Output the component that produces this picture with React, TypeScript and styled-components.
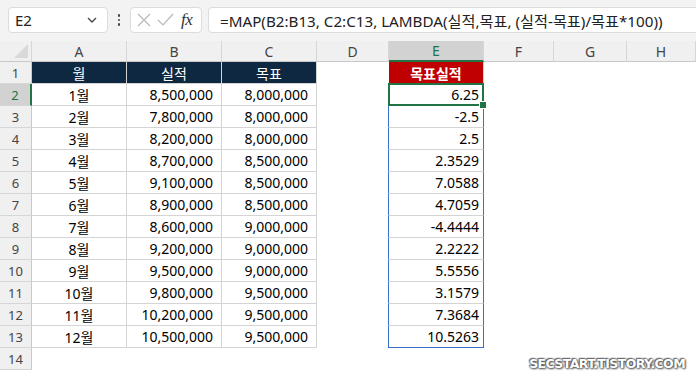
import styled, { createGlobalStyle } from "styled-components";

const GlobalStyle = createGlobalStyle`
    html, body {
        margin: 0;
        padding: 0;
        background: #ffffff;
        font-family: "Noto Sans", "Noto Sans CJK KR", sans-serif;
        overflow: hidden;
    }
`;

const COLS = "32px 95px 95px 95px 72px 95px 70px 73px 1fr";

const Sheet = styled.div`
    position: relative;
    width: 696px;
    height: 375px;
    overflow: hidden;
    background: #ffffff;
`;

const TopBar = styled.div`
    height: 41px;
    box-sizing: border-box;
    padding: 7px 0 0 8px;
    background: #f3f3f3;
    display: flex;
    align-items: flex-start;
`;

const Box = styled.div<{ $w?: number }>`
    height: 26px;
    box-sizing: border-box;
    background: #ffffff;
    border: 1px solid #dcdcdc;
    border-radius: 4px;
    display: flex;
    align-items: center;
    ${(p) => (p.$w ? `width: ${p.$w}px;` : "flex: 1; margin-right: -8px;")}
`;

const NameText = styled.span`
    flex: 1;
    padding-left: 6px;
    font-size: 15px;
    color: #222;
`;

const Dots = styled.div`
    width: 22px;
    height: 26px;
    display: flex;
    flex-direction: column;
    align-items: center;
    justify-content: center;
    gap: 2px;
    & > i {
        width: 2.5px;
        height: 2.5px;
        background: #444;
        border-radius: 50%;
    }
`;

const Fx = styled.span`
    font-family: "Liberation Serif", "DejaVu Serif", serif;
    font-style: italic;
    font-size: 17px;
    color: #333;
    margin-left: 7px;
    letter-spacing: -0.5px;
`;

const Formula = styled.span`
    padding-left: 11px;
    font-size: 15.2px;
    color: #222;
    white-space: nowrap;
`;

const Row = styled.div<{ $h: number }>`
    display: grid;
    grid-template-columns: ${COLS};
    height: ${(p) => p.$h}px;
`;

const HeadCell = styled.div<{ $sel?: boolean }>`
    box-sizing: border-box;
    background: ${(p) => (p.$sel ? "#d2d2d2" : "#f0f0f0")};
    border-right: 1px solid #d6d6d6;
    border-bottom: ${(p) => (p.$sel ? "2px solid #217346" : "1px solid #c8c8c8")};
    color: ${(p) => (p.$sel ? "#217346" : "#444")};
    font-size: 14px;
    display: flex;
    align-items: center;
    justify-content: center;
`;

const Corner = styled(HeadCell)`
    position: relative;
    &::after {
        content: "";
        position: absolute;
        right: 3px;
        bottom: 3px;
        width: 0;
        height: 0;
        border-left: 14px solid transparent;
        border-bottom: 14px solid #d9d9d9;
    }
`;

const RowNum = styled.div<{ $sel?: boolean }>`
    box-sizing: border-box;
    background: ${(p) => (p.$sel ? "#d2d2d2" : "#f0f0f0")};
    border-bottom: 1px solid #d6d6d6;
    border-right: ${(p) => (p.$sel ? "2px solid #217346" : "1px solid #c8c8c8")};
    color: ${(p) => (p.$sel ? "#217346" : "#444")};
    font-size: 13px;
    display: flex;
    align-items: center;
    justify-content: center;
`;

const Cell = styled.div<{
    $align?: "left" | "center" | "right";
    $bg?: string;
    $color?: string;
    $bold?: boolean;
    $grid?: boolean;
    $pad?: number;
}>`
    box-sizing: border-box;
    background: ${(p) => p.$bg || "#ffffff"};
    color: ${(p) => p.$color || "#000"};
    font-size: 14px;
    font-weight: ${(p) => (p.$bold ? 700 : 400)};
    border-right: 1px solid ${(p) => (p.$grid ? "#d4d4d4" : "transparent")};
    border-bottom: 1px solid ${(p) => (p.$grid ? "#d4d4d4" : "transparent")};
    display: flex;
    align-items: center;
    justify-content: ${(p) =>
        p.$align === "right" ? "flex-end" : p.$align === "center" ? "center" : "flex-start"};
    padding-right: ${(p) => p.$pad ?? 0}px;
    white-space: nowrap;
`;

const SpillCell = styled(Cell)<{ $last?: boolean; $active?: boolean }>`
    position: relative;
    border-left: 1px solid #3a6fd0;
    border-right: 1px solid #3a6fd0;
    margin-left: -1px;
    ${(p) => (p.$last ? "border-bottom: 1px solid #3a6fd0;" : "")}
    ${(p) =>
        p.$active
            ? `
        &::before {
            content: "";
            position: absolute;
            left: -1px;
            top: -1px;
            right: -1px;
            bottom: -1px;
            border: 2px solid #217346;
        }
        &::after {
            content: "";
            position: absolute;
            right: -4px;
            bottom: -4px;
            width: 6px;
            height: 6px;
            background: #217346;
            border: 1px solid #ffffff;
            z-index: 2;
        }
    `
            : ""}
`;

const Watermark = styled.div`
    position: absolute;
    right: 11px;
    bottom: 4px;
    font-family: "DejaVu Sans", "Noto Sans", sans-serif;
    font-weight: 700;
    font-size: 12.5px;
    color: #ffffff;
    letter-spacing: -0.6px;
    text-shadow: 0 0 2px #555, 0 0 2px #555, 1px 1px 2px #666, -1px -1px 1px #777;
`;

const Chevron = () => (
    <svg width="12" height="8" viewBox="0 0 12 8" style={{ marginRight: 9 }}>
        <path d="M2 2 L6 6 L10 2" fill="none" stroke="#444" strokeWidth="1.3" />
    </svg>
);

const CancelIcon = () => (
    <svg width="16" height="16" viewBox="0 0 16 16" style={{ marginLeft: 5 }}>
        <path d="M2 2 L14 14 M14 2 L2 14" stroke="#b8b8b8" strokeWidth="1.2" fill="none" />
    </svg>
);

const EnterIcon = () => (
    <svg width="17" height="14" viewBox="0 0 17 14" style={{ marginLeft: 5 }}>
        <path d="M1 7 L6 12 L16 1" stroke="#b8b8b8" strokeWidth="1.2" fill="none" />
    </svg>
);

type Line = { m: string; a: string; t: string; r: string };

const data: Line[] = [
    { m: "1월", a: "8,500,000", t: "8,000,000", r: "6.25" },
    { m: "2월", a: "7,800,000", t: "8,000,000", r: "-2.5" },
    { m: "3월", a: "8,200,000", t: "8,000,000", r: "2.5" },
    { m: "4월", a: "8,700,000", t: "8,500,000", r: "2.3529" },
    { m: "5월", a: "9,100,000", t: "8,500,000", r: "7.0588" },
    { m: "6월", a: "8,900,000", t: "8,500,000", r: "4.7059" },
    { m: "7월", a: "8,600,000", t: "9,000,000", r: "-4.4444" },
    { m: "8월", a: "9,200,000", t: "9,000,000", r: "2.2222" },
    { m: "9월", a: "9,500,000", t: "9,000,000", r: "5.5556" },
    { m: "10월", a: "9,800,000", t: "9,500,000", r: "3.1579" },
    { m: "11월", a: "10,200,000", t: "9,500,000", r: "7.3684" },
    { m: "12월", a: "10,500,000", t: "9,500,000", r: "10.5263" },
];

const NAVY = "#0e2841";

export default function App() {
    return (
        <Sheet>
            <GlobalStyle />
            <TopBar>
                <Box $w={100}>
                    <NameText>E2</NameText>
                    <Chevron />
                </Box>
                <Dots>
                    <i />
                    <i />
                    <i />
                </Dots>
                <Box $w={72}>
                    <CancelIcon />
                    <EnterIcon />
                    <Fx>fx</Fx>
                </Box>
                <div style={{ width: 6 }} />
                <Box>
                    <Formula>=MAP(B2:B13, C2:C13, LAMBDA(실적,목표, (실적-목표)/목표*100))</Formula>
                </Box>
            </TopBar>

            <Row $h={21}>
                <Corner />
                {["A", "B", "C", "D", "E", "F", "G", "H"].map((c) => (
                    <HeadCell key={c} $sel={c === "E"}>
                        {c}
                    </HeadCell>
                ))}
            </Row>

            <Row $h={22}>
                <RowNum>1</RowNum>
                <Cell $grid $align="center" $bg={NAVY} $color="#fff">월</Cell>
                <Cell $grid $align="center" $bg={NAVY} $color="#fff">실적</Cell>
                <Cell $grid $align="center" $bg={NAVY} $color="#fff">목표</Cell>
                <Cell />
                <Cell $grid $align="center" $bg="#c00000" $color="#fff" $bold>목표실적</Cell>
                <Cell />
                <Cell />
                <Cell />
            </Row>

            {data.map((d, i) => (
                <Row $h={22} key={d.m}>
                    <RowNum $sel={i === 0}>{i + 2}</RowNum>
                    <Cell $grid $align="center">{d.m}</Cell>
                    <Cell $grid $align="right" $pad={8}>{d.a}</Cell>
                    <Cell $grid $align="right" $pad={8}>{d.t}</Cell>
                    <Cell />
                    <SpillCell $grid $align="right" $pad={4} $active={i === 0} $last={i === data.length - 1}>
                        {d.r}
                    </SpillCell>
                    <Cell />
                    <Cell />
                    <Cell />
                </Row>
            ))}

            <Row $h={22}>
                <RowNum>14</RowNum>
            </Row>

            <Watermark>SECSTART.TISTORY.COM</Watermark>
        </Sheet>
    );
}
